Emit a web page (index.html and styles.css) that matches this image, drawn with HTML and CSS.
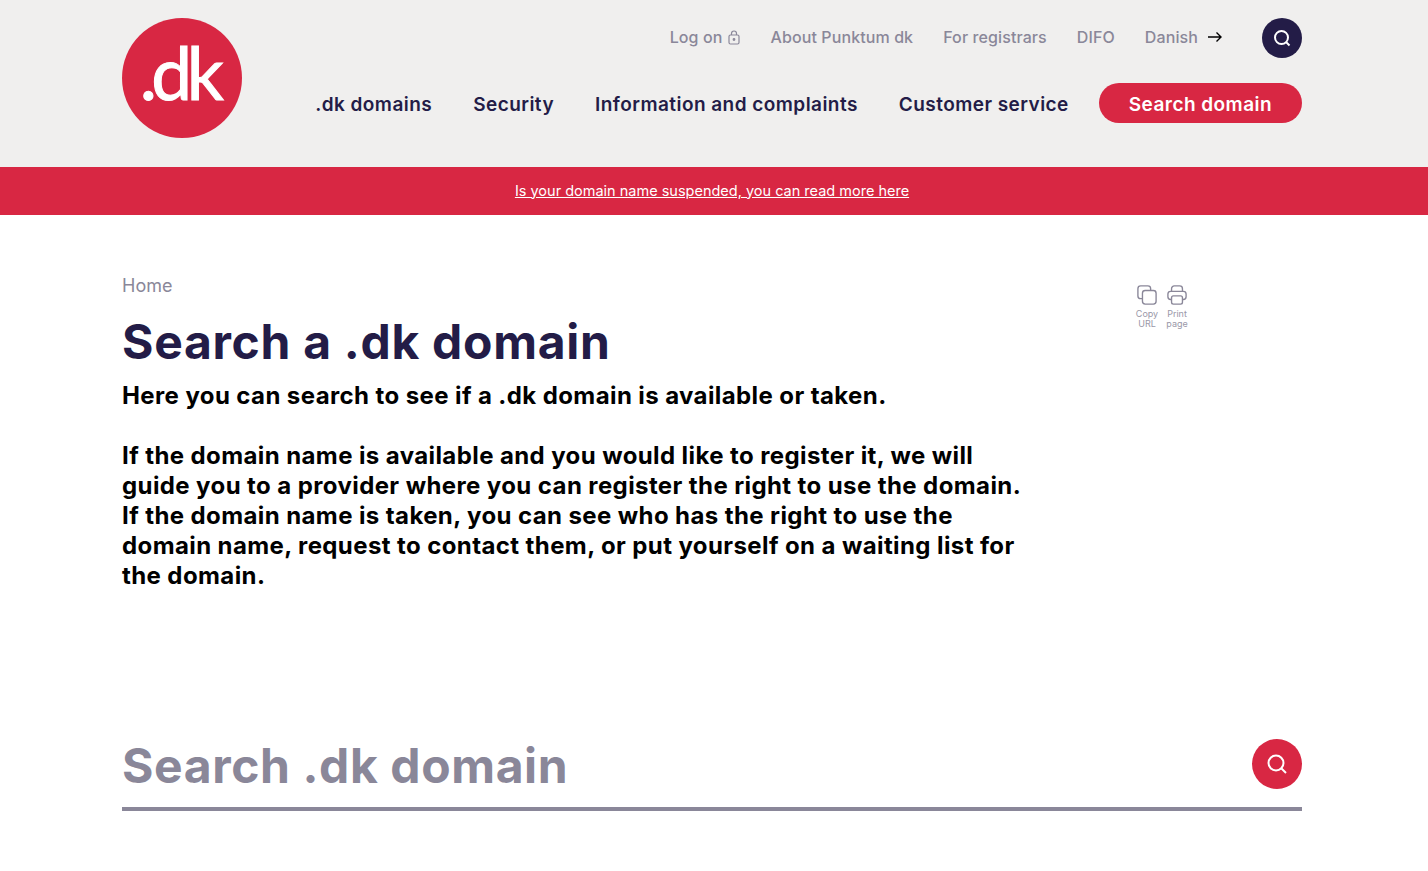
FILE: index.html
```html
<!DOCTYPE html>
<html lang="en">
<head>
    <meta charset="UTF-8">
    <meta name="viewport" content="width=device-width, initial-scale=1.0">
    <title>Search a .dk domain</title>
    <link rel="stylesheet" href="styles.css">
</head>
<body>
    <header class="site-header">
        <div class="wrap header-inner">
            <a class="logo" href="#">.dk</a>
            <div class="header-nav">
                <nav class="top-nav">
                    <a href="#" class="top-link">Log on
                        <svg class="lock-icon" width="12" height="15" viewBox="0 0 12 15" fill="none" stroke="#8a8799" stroke-width="1.2"><rect x="1" y="5" width="10" height="9" rx="1.5"/><path d="M3.5 5V3.5a2.5 2.5 0 0 1 5 0V5"/><circle cx="6" cy="9.5" r="0.8" fill="#8a8799"/></svg>
                    </a>
                    <a href="#" class="top-link">About Punktum dk</a>
                    <a href="#" class="top-link">For registrars</a>
                    <a href="#" class="top-link">DIFO</a>
                    <a href="#" class="top-link lang">Danish
                        <svg class="arrow-icon" width="16" height="12" viewBox="0 0 16 12" fill="none" stroke="#000" stroke-width="1.4"><path d="M1 6h13M9.5 1.5 14 6l-4.500 4.500"/></svg>
                    </a>
                    <a href="#" class="round-btn dark">
                        <svg width="20" height="20" viewBox="0 0 20 20" fill="none" stroke="#fff" stroke-width="2"><circle cx="9.500" cy="9.500" r="6.500"/><path d="m14 14 3.500 3.500"/></svg>
                    </a>
                </nav>
                <nav class="main-nav">
                    <a href="#">.dk domains</a>
                    <a href="#">Security</a>
                    <a href="#">Information and complaints</a>
                    <a href="#">Customer service</a>
                    <a href="#" class="search-btn">Search domain</a>
                </nav>
            </div>
        </div>
    </header>

    <div class="notice"><a href="#">Is your domain name suspended, you can read more here</a></div>

    <main class="wrap content">
        <div class="intro">
            <div class="intro-text">
                <div class="breadcrumb">Home</div>
                <h1>Search a .dk domain</h1>
                <p>Here you can search to see if a .dk domain is available or taken.</p>
                <p>If the domain name is available and you would like to register it, we will guide you to a provider where you can register the right to use the domain. If the domain name is taken, you can see who has the right to use the domain name, request to contact them, or put yourself on a waiting list for the domain.</p>
            </div>
            <div class="tools">
                <a href="#" class="tool">
                    <svg width="20" height="20" viewBox="0 0 22 22" fill="none" stroke="#8a8799" stroke-width="1.500"><rect x="1" y="1" width="14" height="14" rx="3"/><rect x="6" y="6" width="15" height="15" rx="3" fill="#fff"/></svg>
                    <span>Copy URL</span>
                </a>
                <a href="#" class="tool">
                    <svg width="20" height="20" viewBox="0 0 22 22" fill="none" stroke="#8a8799" stroke-width="1.500"><path d="M5 7V4a3 3 0 0 1 3-3h6a3 3 0 0 1 3 3v3"/><path d="M5 16H4a3 3 0 0 1-3-3v-3a3 3 0 0 1 3-3h14a3 3 0 0 1 3 3v3a3 3 0 0 1-3 3h-1"/><rect x="5" y="12" width="12" height="9" rx="2"/></svg>
                    <span>Print page</span>
                </a>
            </div>
        </div>

        <form class="domain-search">
            <input type="text" placeholder="Search .dk domain">
            <button type="button" class="round-btn red">
                <svg width="22" height="22" viewBox="0 0 22 22" fill="none" stroke="#fff" stroke-width="2"><circle cx="10" cy="10" r="7.500"/><path d="m15.500 15.500 4.500 4.500"/></svg>
            </button>
        </form>
    </main>
</body>
</html>
```

FILE: styles.css
```css
* {
    box-sizing: border-box;
}
body {
    margin: 0;
    font-family: Inter, "Noto Sans", sans-serif;
    color: #000;
    background-color: #fff;
}
a {
    text-decoration: none;
}
.wrap {
    width: 1180px;
    margin-left: 122px;
}
.site-header {
    height: 167px;
    background-color: #f0efee;
}
.header-inner {
    display: flex;
    justify-content: space-between;
    padding-top: 18px;
}
.logo {
    display: flex;
    align-items: center;
    justify-content: center;
    width: 120px;
    height: 120px;
    padding: 0 6px 13px 0;
    border-radius: 50%;
    background-color: #d82743;
    color: #fff;
    font-family: Lato, sans-serif;
    font-size: 73px;
    font-weight: 400;
    letter-spacing: -5.5px;
    -webkit-text-stroke: 1px #fff;
}
.top-nav {
    display: flex;
    align-items: center;
    justify-content: flex-end;
    gap: 30px;
    height: 40px;
}
.top-link {
    display: flex;
    align-items: center;
    gap: 6px;
    padding-bottom: 2px;
    color: #8a8799;
    font-size: 16px;
    font-weight: 500;
    letter-spacing: 0.1px;
}
.top-link.lang {
    gap: 9px;
}
.round-btn {
    display: flex;
    align-items: center;
    justify-content: center;
    border: none;
    border-radius: 50%;
    padding: 0;
}
.round-btn.dark {
    width: 40px;
    height: 40px;
    margin-left: 9px;
    background-color: #231c47;
}
.round-btn.red {
    width: 50px;
    height: 50px;
    background-color: #d82743;
}
.main-nav {
    display: flex;
    align-items: center;
    gap: 41px;
    margin-top: 25px;
}
.main-nav a {
    padding-top: 2px;
    color: #231c47;
    font-size: 19px;
    font-weight: 600;
    letter-spacing: 0.45px;
}
.main-nav a.search-btn {
    display: flex;
    align-items: center;
    height: 40px;
    margin-left: -11px;
    padding: 2px 30px 0;
    border-radius: 20px;
    background-color: #d82743;
    color: #fff;
}
.notice {
    display: flex;
    align-items: center;
    justify-content: center;
    height: 48px;
    padding: 0 4px 2px 0;
    background-color: #d82743;
}
.notice a {
    color: #fff;
    font-size: 14.5px;
    text-decoration: underline;
}
.content {
    padding-top: 61px;
}
.intro {
    display: flex;
    height: 463px;
}
.intro-text {
    width: 905px;
}
.breadcrumb {
    color: #8a8799;
    font-size: 18px;
    line-height: 20px;
}
h1 {
    margin: 15px 0 8px;
    color: #231c47;
    font-size: 48px;
    font-weight: 700;
    line-height: 62px;
    letter-spacing: 0.7px;
}
.intro-text p {
    margin: 0 0 30px;
    font-size: 24px;
    font-weight: 700;
    line-height: 30px;
    letter-spacing: 0.4px;
}
.tools {
    display: flex;
    gap: 8px;
    margin: 9px 0 0 109px;
}
.tool {
    display: flex;
    flex-direction: column;
    align-items: center;
    width: 22px;
    color: #9a98a8;
    font-size: 9px;
    line-height: 10px;
    text-align: center;
}
.tool span {
    margin-top: 4px;
}
.domain-search {
    display: flex;
    align-items: flex-start;
    justify-content: space-between;
    height: 72px;
    border-bottom: 4px solid #8a8799;
}
.domain-search input {
    flex: 1;
    height: 52px;
    border: none;
    outline: none;
    padding: 0;
    font-family: inherit;
    font-size: 48px;
    font-weight: 700;
    letter-spacing: 0.6px;
}
.domain-search input::placeholder {
    color: #8a8799;
    opacity: 1;
}
```
